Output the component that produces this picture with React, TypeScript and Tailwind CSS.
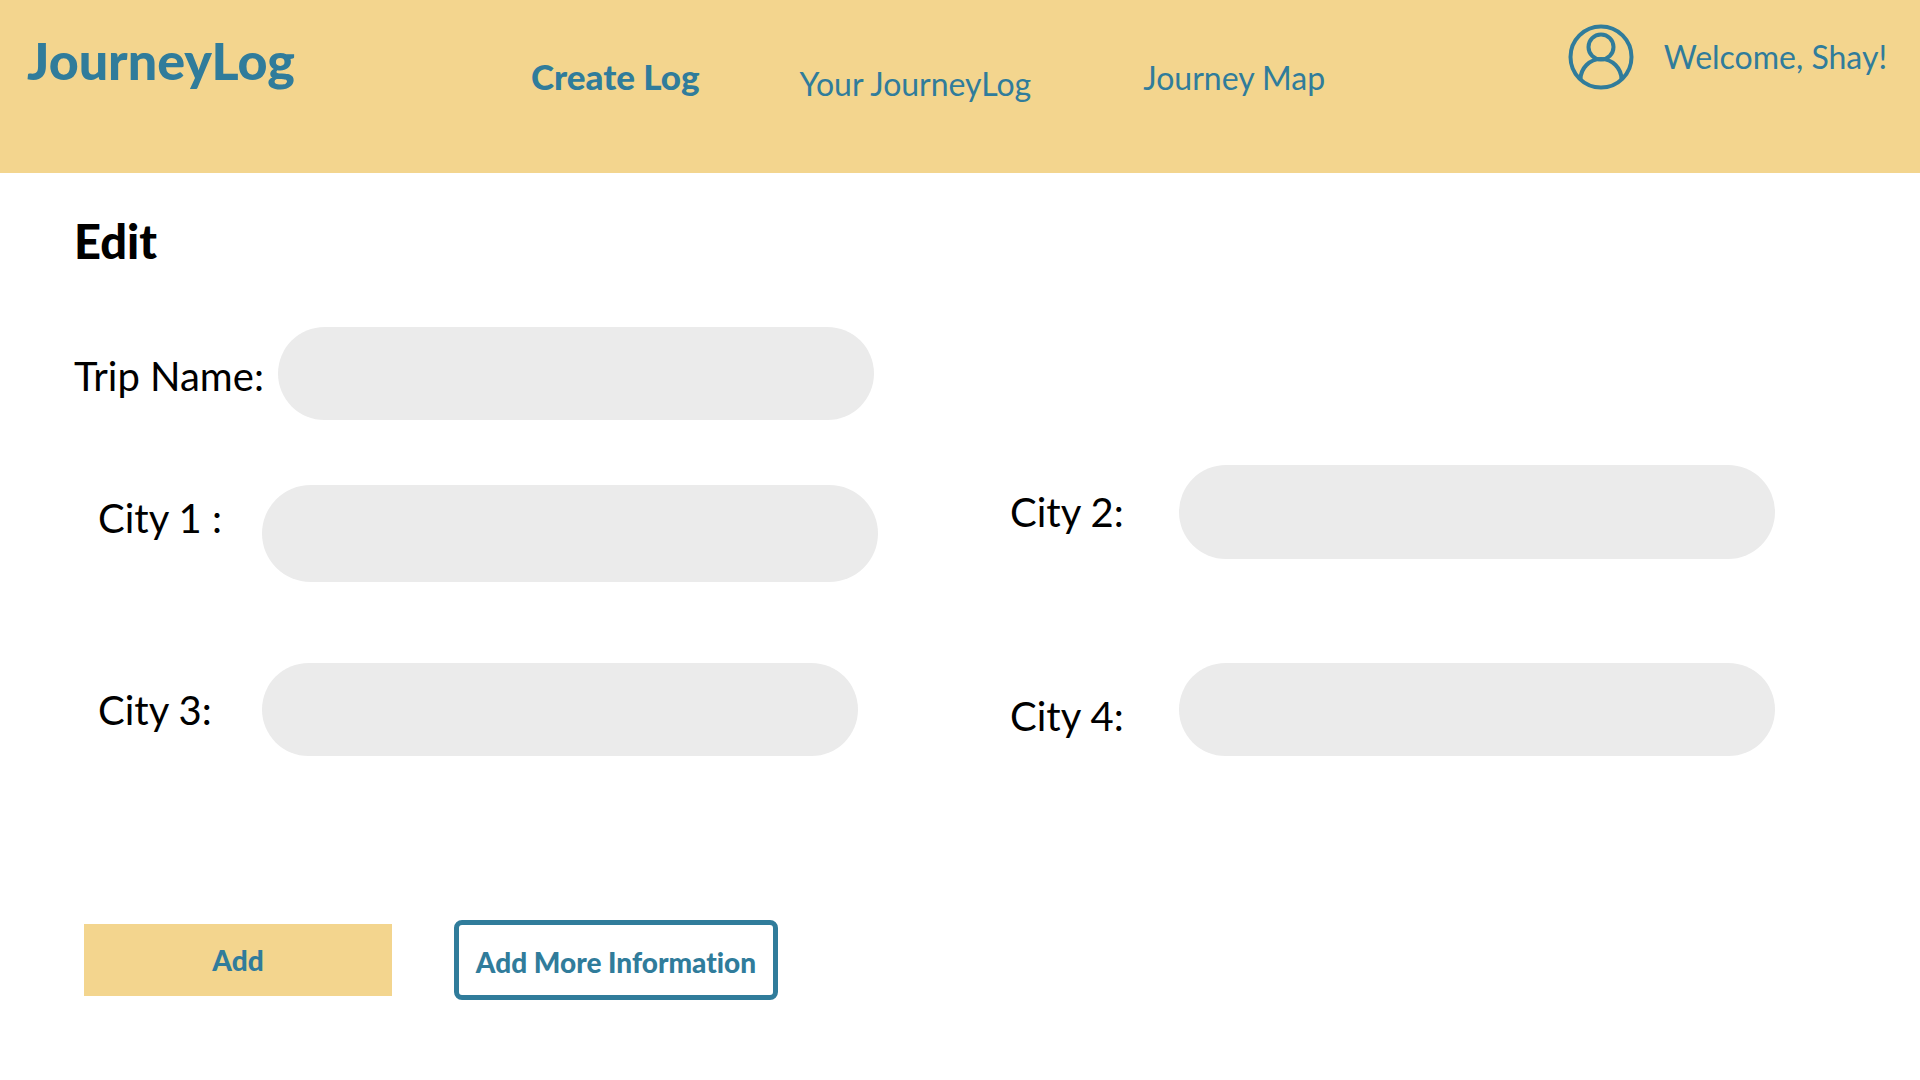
type FieldProps = {
  id: string;
  label: string;
  rowClass?: string;
  labelClass: string;
  inputClass: string;
};

function Field({ id, label, rowClass = "", labelClass, inputClass }: FieldProps) {
  return (
    <div className={`flex items-center ${rowClass}`}>
      <label htmlFor={id} className={`shrink-0 whitespace-nowrap text-[40px] leading-[48px] ${labelClass}`}>
        {label}
      </label>
      <input
        id={id}
        type="text"
        className={`min-w-0 flex-1 rounded-full bg-[#ebebeb] px-10 text-3xl outline-none focus:ring-4 focus:ring-[#307c9b] ${inputClass}`}
      />
    </div>
  );
}

function UserIcon() {
  return (
    <svg viewBox="0 0 66 66" className="size-[66px]" fill="none" stroke="currentColor" strokeWidth="4" aria-hidden="true">
      <circle cx="33" cy="33" r="30.5" />
      <circle cx="33" cy="23" r="12.5" />
      <path d="M12.500 55.500A20.500 20.500 0 0 1 53.500 55.500" />
    </svg>
  );
}

export default function App() {
  return (
    <div className="min-h-screen bg-white font-['Lato',sans-serif] text-black [font-variant-ligatures:none]">
      <header className="flex h-[173px] items-start bg-[#f3d58e] pl-[27px] pr-[33px] text-[#307c9b]">
        <a href="#home" className="pt-7 text-[52px] font-black leading-[64px]">
          JourneyLog
        </a>
        <nav className="ml-[236px] flex items-start whitespace-nowrap pt-14 text-[32px] leading-[44px]">
          <a href="#create" className="text-[35px] font-black leading-[40px]">Create Log</a>
          <a href="#log" className="ml-[100px] pt-[6px]">Your JourneyLog</a>
          <a href="#map" className="ml-[112px]">Journey Map</a>
        </nav>
        <div className="ml-auto flex items-center gap-[30px] whitespace-nowrap pt-6 text-[32px] leading-[40px]">
          <UserIcon />
          <span>Welcome, Shay!</span>
        </div>
      </header>

      <main className="pl-[74px] pr-[145px] pt-10">
        <h1 className="text-[47px] font-black leading-[56px]">Edit</h1>
        <form onSubmit={(e) => e.preventDefault()}>
          <div className="mt-[58px] grid grid-cols-[804fr_765fr] gap-x-[132px]">
            <div className="flex flex-col">
              <Field id="trip" label="Trip Name:" rowClass="mr-1" labelClass="w-[204px] pt-1" inputClass="h-[93px]" />
              <Field id="city1" label="City 1 :" rowClass="mt-[65px] pl-6" labelClass="w-[164px] pb-8" inputClass="h-[97px]" />
              <Field id="city3" label="City 3:" rowClass="mt-[81px] mr-5 pl-6" labelClass="w-[164px]" inputClass="h-[93px]" />
            </div>
            <div className="flex flex-col pt-[138px]">
              <Field id="city2" label="City 2:" labelClass="w-[169px]" inputClass="h-[94px]" />
              <Field id="city4" label="City 4:" rowClass="mt-[104px]" labelClass="w-[169px] pt-3" inputClass="h-[93px]" />
            </div>
          </div>
          <div className="mt-[164px] flex items-center gap-[62px] pl-[10px] text-[28px] font-black text-[#307c9b]">
            <button type="submit" className="h-[72px] w-[308px] bg-[#f3d58e]">Add</button>
            <button type="button" className="h-[80px] w-[324px] whitespace-nowrap rounded-lg border-[5px] border-[#307c9b] bg-white pt-1">
              Add More Information
            </button>
          </div>
        </form>
      </main>
    </div>
  );
}
